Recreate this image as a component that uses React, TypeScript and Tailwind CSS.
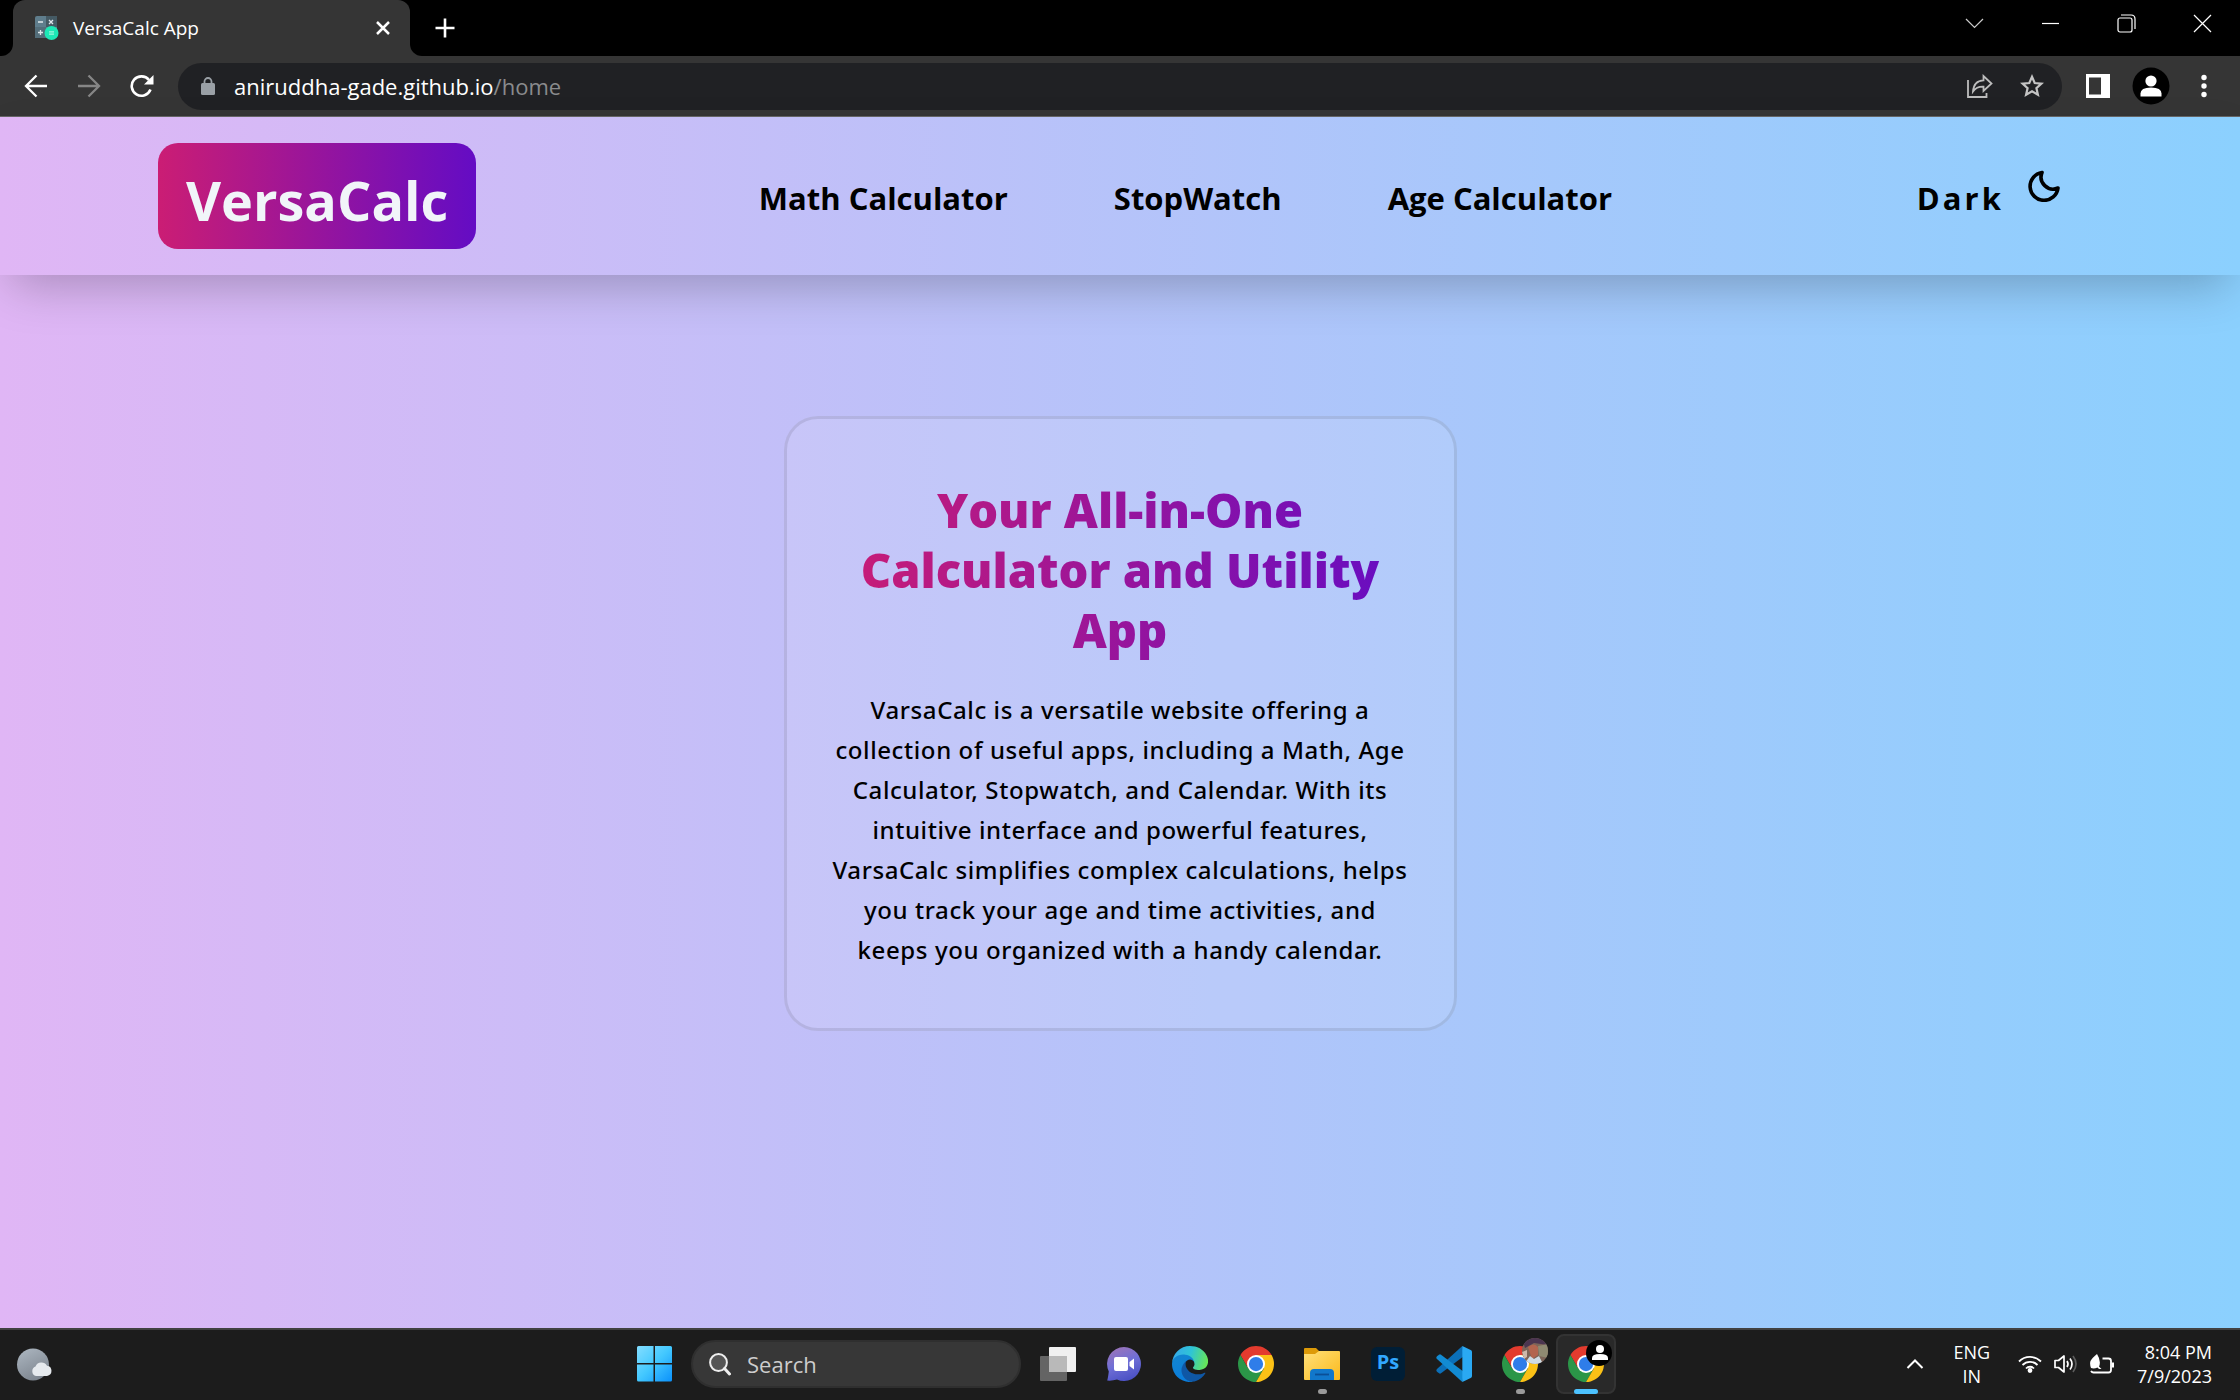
import React from "react";

function Favicon() {
  return (
    <svg width="24" height="24" viewBox="0 0 24 24" aria-hidden="true">
      <rect x="0" y="0" width="22" height="22" rx="2" fill="#5f7d8c" />
      <rect x="11" y="0" width="11" height="11" fill="#455a64" />
      <rect x="0" y="11" width="11" height="11" fill="#546e7a" />
      <path d="M3 6h5M14 4l4 4M18 4l-4 4M3 16.500h5M5.500 14v5" stroke="#dfe7ea" strokeWidth="1.300" />
      <circle cx="16.500" cy="17" r="7" fill="#1de9b6" />
      <path d="M14 15.800h5M14 18.200h5" stroke="#9ff7e0" strokeWidth="1.300" />
    </svg>
  );
}

function ChromeLogo() {
  return (
    <svg width="36" height="36" viewBox="0 0 48 48" aria-hidden="true">
      <path d="M24 12H44.780A24 24 0 0 0 3.220 12L13.600 30 24 24z" fill="#e33b2e" />
      <path d="M3.220 12A24 24 0 0 0 24 48L34.400 30 24 24 13.600 30z" fill="#2b9648" />
      <path d="M44.780 12A24 24 0 0 1 24 48L34.400 30 24 12z" fill="#fbc116" />
      <circle cx="24" cy="24" r="12" fill="#fff" />
      <circle cx="24" cy="24" r="9.500" fill="#2f7de9" />
    </svg>
  );
}

function EdgeLogo() {
  return (
    <svg width="36" height="36" viewBox="0 0 256 256" aria-hidden="true">
      <defs>
        <linearGradient id="edgeTop" x1="0" y1="0.3" x2="1" y2="0.5">
          <stop offset="0" stopColor="#35a8ec" />
          <stop offset="0.5" stopColor="#2fc4d6" />
          <stop offset="1" stopColor="#66e558" />
        </linearGradient>
        <linearGradient id="edgeMid" x1="0" y1="0" x2="0.300" y2="1">
          <stop offset="0" stopColor="#1386cf" />
          <stop offset="1" stopColor="#0a7ddb" />
        </linearGradient>
      </defs>
      <path fill="#0f57a5" d="M231 190.500c-3.400 1.800-6.900 3.400-10.500 4.700a101.200 101.200 0 0 1-35.800 6.300c-47.200 0-88.300-32.400-88.300-74 .1-11.400 6.400-21.800 16.400-27.300-42.700 1.800-53.700 46.300-53.700 72.300 0 73.800 68 81.200 82.600 81.200 7.900 0 19.800-2.300 27-4.500l1.300-.4a128.300 128.300 0 0 0 66.600-52.800 4 4 0 0 0-5.600-5.500z" />
      <path fill="url(#edgeMid)" d="M105.700 241.400a79.200 79.200 0 0 1-22.700-21.300 80.700 80.700 0 0 1 29.500-120c3.200-1.500 8.500-4.100 15.600-4a32.400 32.400 0 0 1 25.700 13 31.900 31.900 0 0 1 6.300 18.700c0-.2 24.500-79.600-80-79.600-43.900 0-80 41.700-80 78.200-.2 19.300 4 38.500 12.100 56a128 128 0 0 0 156.400 67 75.500 75.500 0 0 1-62.800-8z" />
      <path fill="url(#edgeTop)" d="M152.300 148.900c-.9 1-3.400 2.500-3.400 5.600 0 2.600 1.700 5.200 4.800 7.300 14.400 10.100 41.700 8.700 41.800 8.700 10.800 0 21.300-2.900 30.600-8.300a61.500 61.500 0 0 0 30.500-53c.3-22.400-8-37.300-11.400-44C223.700 23.200 177.700 0 127.700 0A128 128 0 0 0 0 126.200c.5-36.500 36.800-66 80-66 3.500 0 23.500.3 42 10 16.300 8.600 24.900 19 30.800 29.300 6.200 10.700 7.300 24.100 7.300 29.500 0 5.300-2.700 13.300-7.800 19.900z" />
    </svg>
  );
}

function CodeLogo() {
  return (
    <svg width="36" height="36" viewBox="0 0 108 108" aria-hidden="true">
      <path d="M79 0 3 69q-4 4 0 8l6 5q3 2 6 0L84 30z" fill="#0b6fb8" />
      <path d="M79 108 3 39q-4-4 0-8l6-5q3-2 6 0L84 78z" fill="#128bd3" />
      <path d="M79 0 104 12q4 2 4 6V90q0 4-4 6L79 108z" fill="#2aa9f3" />
    </svg>
  );
}

function StartLogo() {
  return (
    <svg width="36" height="36" viewBox="0 0 36 36" aria-hidden="true">
      <defs>
        <linearGradient id="winBlue" gradientUnits="userSpaceOnUse" x1="0" y1="0" x2="36" y2="36">
          <stop offset="0" stopColor="#85deff" />
          <stop offset="0.5" stopColor="#43c8ff" />
          <stop offset="1" stopColor="#0a90fb" />
        </linearGradient>
      </defs>
      <path d="M2.500 0H17.500v17H1V1.500A1.500 1.500 0 0 1 2.500 0zM19 0h15.500a1.500 1.500 0 0 1 1.500 1.500V17H19zM1 18.500h16.500v17H2.500A1.500 1.500 0 0 1 1 34zM19 18.500h17V34a1.500 1.500 0 0 1-1.500 1.500H19z" fill="url(#winBlue)" />
    </svg>
  );
}

function TaskViewLogo() {
  return (
    <svg width="36" height="36" viewBox="0 0 36 36" aria-hidden="true">
      <rect x="9" y="1" width="27" height="25" rx="1" fill="#f0f0f0" />
      <rect x="0" y="10" width="27" height="25" rx="1" fill="#646464" />
      <path d="M9 10H27V26H9z" fill="#b9b9b9" />
    </svg>
  );
}

function ChatLogo() {
  return (
    <svg width="36" height="36" viewBox="0 0 36 36" aria-hidden="true">
      <defs>
        <linearGradient id="chat" x1="0.2" y1="0" x2="0.6" y2="1">
          <stop offset="0" stopColor="#9d74b8" />
          <stop offset="0.5" stopColor="#6f6fd6" />
          <stop offset="1" stopColor="#4a50c4" />
        </linearGradient>
      </defs>
      <path d="M18 1a17 17 0 1 1-7 32.500Q6 35 1.200 34.500 2 32 2.800 25.500A17 17 0 0 1 18 1z" fill="url(#chat)" />
      <rect x="8" y="11" width="14" height="14" rx="2" fill="#fff" />
      <path d="M23.500 16 28 12.500V23.500L23.500 20z" fill="#fff" />
    </svg>
  );
}

function FolderLogo() {
  return (
    <svg width="36" height="36" viewBox="0 0 36 36" aria-hidden="true">
      <defs>
        <linearGradient id="folder" x1="0" y1="0" x2="1" y2="1">
          <stop offset="0" stopColor="#ffe07a" />
          <stop offset="1" stopColor="#fbb91b" />
        </linearGradient>
      </defs>
      <path d="M0 3q0-1 1-1h11l4 4-4 4H0z" fill="#dd9a08" />
      <path d="M0 8h11l4-3h20q1 0 1 1v27q0 1-1 1H1q-1 0-1-1z" fill="url(#folder)" />
      <path d="M6 34V27q0-4 4-4h16q4 0 4 4v7z" fill="#1177cb" />
      <path d="M11 28.500h14" stroke="#0b4f96" strokeWidth="1.800" />
    </svg>
  );
}

function PsLogo() {
  return (
    <span className="flex size-[34px] items-center justify-center rounded-md bg-[#001e36] pb-1 text-[20px] leading-none font-bold text-[#31a8ff]">
      Ps
    </span>
  );
}

function Avatar() {
  return (
    <svg width="26" height="26" viewBox="0 0 26 26" aria-hidden="true">
      <circle cx="13" cy="13" r="13" fill="#000" />
      <circle cx="14" cy="9" r="4" fill="#fff" />
      <path d="M6 20v-2q0-4 8-4t8 4v2z" fill="#fff" />
    </svg>
  );
}

function Photo() {
  return (
    <svg width="26" height="26" viewBox="0 0 26 26" aria-hidden="true">
      <clipPath id="photoClip">
        <circle cx="13" cy="13" r="13" />
      </clipPath>
      <g clipPath="url(#photoClip)">
        <path d="M0 0H26V26H0z" fill="#7d6559" />
        <path d="M0 0H26V7L12 5 3 10z" fill="#4b3550" />
        <path d="M16 8 26 6V20L17 18z" fill="#8f8a72" />
        <path d="M6 9q6-5 10 0v8l-6 4z" fill="#b3654f" />
        <path d="M3 25 8 18l4 3 5-3 3 6-6 4z" fill="#cfdbe4" />
        <path d="M0 14 5 12v7l-3 2z" fill="#cdb9ab" />
      </g>
    </svg>
  );
}

const apps = [
  { name: "Task View", icon: <TaskViewLogo /> },
  { name: "Chat", icon: <ChatLogo /> },
  { name: "Microsoft Edge", icon: <EdgeLogo /> },
  { name: "Google Chrome", icon: <ChromeLogo /> },
  { name: "File Explorer", icon: <FolderLogo />, running: true },
  { name: "Photoshop", icon: <PsLogo /> },
  { name: "Visual Studio Code", icon: <CodeLogo /> },
  { name: "Chrome, first profile", icon: <ChromeLogo />, running: true, badge: <Photo /> },
  { name: "Chrome, second profile", icon: <ChromeLogo />, active: true, badge: <Avatar /> },
];

function TabStrip() {
  return (
    <div className="flex h-14 items-stretch justify-between bg-black text-white">
      <div className="flex items-stretch">
        <div className="flex w-[13px] bg-[#353535]">
          <div className="flex-1 rounded-br-xl bg-black" />
        </div>
        <div className="bg-[#353535]">
          <div className="h-full bg-black">
            <div className="flex h-full w-[397px] items-center rounded-t-xl bg-[#353535] pr-[18px] pl-[22px]">
              <Favicon />
              <span className="ml-[14px] flex-1 text-[19px]">VersaCalc App</span>
              <button aria-label="Close tab">
                <svg width="18" height="18" viewBox="0 0 18 18">
                  <path d="M3 3l12 12M15 3 3 15" stroke="#fff" strokeWidth="2.500" />
                </svg>
              </button>
            </div>
          </div>
        </div>
        <div className="flex w-[13px] bg-[#353535]">
          <div className="flex-1 rounded-bl-xl bg-black" />
        </div>
        <button aria-label="New tab" className="ml-3">
          <svg width="20" height="20" viewBox="0 0 20 20">
            <path d="M10 0.500v19M0.500 10h19" stroke="#fff" strokeWidth="2.600" />
          </svg>
        </button>
      </div>
      <div className="flex items-start gap-[57px] pt-[14px] pr-[28px]">
        <button aria-label="Search tabs">
          <svg width="19" height="19" viewBox="0 0 19 19" fill="none" stroke="#ccc">
            <path d="M1 5l8.500 8.500L18 5" strokeWidth="1.200" />
          </svg>
        </button>
        <button aria-label="Minimize">
          <svg width="19" height="19" viewBox="0 0 19 19">
            <path d="M1 9.500h17" stroke="#fff" strokeWidth="1.200" />
          </svg>
        </button>
        <button aria-label="Restore">
          <svg width="19" height="19" viewBox="0 0 19 19" fill="none" stroke="#fff" strokeWidth="1.200">
            <rect x="1" y="4" width="14" height="14" rx="2" />
            <path d="M4 1h10q4 0 4 4v10" />
          </svg>
        </button>
        <button aria-label="Close window">
          <svg width="19" height="19" viewBox="0 0 19 19">
            <path d="M1 1l17 17M18 1 1 18" stroke="#fff" strokeWidth="1.200" />
          </svg>
        </button>
      </div>
    </div>
  );
}

function Toolbar() {
  return (
    <div className="flex h-[61px] items-center border-b border-[#666] bg-[#353535] px-[24px]">
      <div className="mr-[24px] flex gap-[29px]">
        <button aria-label="Back">
          <svg width="24" height="24" viewBox="0 0 24 24" fill="none" stroke="#fff" strokeWidth="2.300">
            <path d="M23 12H3M12.500 1.500 2 12l10.500 10.500" />
          </svg>
        </button>
        <button aria-label="Forward">
          <svg width="24" height="24" viewBox="0 0 24 24" fill="none" stroke="#868686" strokeWidth="2.300">
            <path d="M1 12h20M11.500 1.500 22 12 11.500 22.500" />
          </svg>
        </button>
        <button aria-label="Reload">
          <svg width="24" height="24" viewBox="0 0 24 24">
            <path d="M20.500 15.500a9.700 9.700 0 1 1-1.500-9.500" fill="none" stroke="#fff" strokeWidth="2.600" />
            <path d="M23.500 1v9.500H14z" fill="#fff" />
          </svg>
        </button>
      </div>
      <div className="flex h-[47px] flex-1 items-center rounded-full bg-[#202124] pr-[18px] pl-[23px]">
        <svg width="14" height="18" viewBox="0 0 14 18" aria-hidden="true">
          <rect x="0" y="6" width="14" height="12" rx="1.500" fill="#9aa0a6" />
          <path d="M3.500 7V4.500a3.500 3.500 0 0 1 7 0V7" fill="none" stroke="#9aa0a6" strokeWidth="1.800" />
        </svg>
        <span className="ml-[19px] flex-1 text-[22px] text-white">
          aniruddha-gade.github.io<span className="text-[#8a8b8d]">/home</span>
        </span>
        <button aria-label="Share" className="mr-[27px]">
          <svg width="26" height="24" viewBox="0 0 26 24" fill="none" stroke="#bdbdbd" strokeWidth="1.800">
            <path d="M1 6v17h18.500v-4" />
            <path d="M6 17.500C6.500 10.500 10.500 6.500 16.500 6.300V2l8 7.500-8 7.500v-4.300C12 12.500 8.500 14 6 17.500z" />
          </svg>
        </button>
        <button aria-label="Bookmark this page">
          <svg width="24" height="24" viewBox="0 0 24 24" fill="none" stroke="#c4c4c4" strokeWidth="2.200">
            <path d="m12 2.800 2.700 6.200 6.800.6-5.100 4.500 1.500 6.600L12 17.200l-5.900 3.500 1.500-6.600-5.100-4.500 6.800-.6z" />
          </svg>
        </button>
      </div>
      <button aria-label="Side panel" className="ml-6">
        <svg width="24" height="24" viewBox="0 0 24 24">
          <path d="M0 0h24v24H0zM3 3.500v17h12v-17z" fill="#fff" fillRule="evenodd" />
        </svg>
      </button>
      <button aria-label="Profile" className="ml-[22px]">
        <svg width="38" height="38" viewBox="0 0 38 38">
          <circle cx="19" cy="19" r="18.500" fill="#000" />
          <circle cx="19" cy="14" r="5.600" fill="#fff" />
          <path d="M8.500 29.500v-3q0-6 10.500-6t10.500 6v3z" fill="#fff" />
        </svg>
      </button>
      <button aria-label="Menu" className="ml-[22px]">
        <svg width="24" height="24" viewBox="0 0 24 24" fill="#fff">
          <circle cx="12" cy="3.500" r="2.700" />
          <circle cx="12" cy="12" r="2.700" />
          <circle cx="12" cy="20.500" r="2.700" />
        </svg>
      </button>
    </div>
  );
}

function SiteHeader() {
  return (
    <header className="flex items-center justify-between bg-linear-to-r/srgb from-[#e0b6f5] to-[#8bd0fe] px-[158px] py-[26px] shadow-[0_20px_50px_-12px_rgba(0,0,0,0.26)]">
      <a href="#home" className="rounded-[20px] bg-linear-to-r/srgb from-[#cb1d74] to-[#640cc4] px-7 pt-2 text-[54px] leading-[98px] font-bold text-[#f1f5f9]">
        VersaCalc
      </a>
      <nav className="flex gap-[106px] pt-1 text-[31px] font-bold text-black">
        <a href="#math">Math Calculator</a>
        <a href="#stopwatch">StopWatch</a>
        <a href="#age">Age Calculator</a>
      </nav>
      <button className="flex items-center gap-6 px-[22px] pt-1 text-[31px] font-bold tracking-widest text-black">
        Dark
        <svg width="32" height="32" viewBox="0 0 32 32" className="mb-6" fill="none" stroke="#000" strokeWidth="3.600" strokeLinejoin="round" aria-hidden="true">
          <path d="M14 2.500A14 14 0 1 0 30 18 12 12 0 0 1 14 2.500z" />
        </svg>
      </button>
    </header>
  );
}

function Taskbar() {
  return (
    <footer className="grid h-[72px] grid-cols-[1fr_auto_1fr] items-center border-t-2 border-[#414141] bg-[#1c1c1c] text-white">
      <button aria-label="Weather" className="ml-4 justify-self-start">
        <svg width="36" height="34" viewBox="0 0 36 34">
          <defs>
            <linearGradient id="moonGrey" x1="0.2" y1="0" x2="0.700" y2="1">
              <stop offset="0" stopColor="#aab4be" />
              <stop offset="1" stopColor="#7b838d" />
            </linearGradient>
          </defs>
          <circle cx="17" cy="16.500" r="16" fill="url(#moonGrey)" />
          <path d="M20 28a5 5 0 0 1-.5-9.500 6.500 6.500 0 0 1 11.500-.8A5.200 5.200 0 0 1 31 28z" fill="#e6eaee" />
        </svg>
      </button>
      <div className="flex items-center pb-0.5">
        <button aria-label="Start" className="flex w-[66px] justify-center">
          <StartLogo />
        </button>
        <label className="mx-1 flex h-12 w-[330px] items-center gap-4 rounded-full border-2 border-[#2f2f2f] bg-[#373737] pl-4">
          <svg width="22" height="23" viewBox="0 0 22 23" fill="none" stroke="#eee" aria-hidden="true">
            <circle cx="9.500" cy="9.500" r="8.400" strokeWidth="2" fill="#555" />
            <path d="m15.500 15.500 5 5.500" strokeWidth="3" strokeLinecap="round" />
          </svg>
          <input type="text" aria-label="Search" placeholder="Search" className="w-60 bg-transparent text-[22px] outline-none placeholder:text-[#cdcdcd]" />
        </label>
        {apps.map((app) => (
          <button key={app.name} aria-label={app.name} className="flex w-[66px] justify-center">
            <span className={app.active ? "relative flex size-[60px] items-center justify-center rounded-lg border-2 border-[#333] bg-[#292929]" : "relative flex size-[60px] items-center justify-center"}>
              {app.icon}
              {app.badge && <span className="absolute top-1 right-0.5">{app.badge}</span>}
              {app.running && <span className="absolute bottom-0 h-[5px] w-[9px] rounded-full bg-[#9a9a9a]" />}
              {app.active && <span className="absolute -bottom-0.5 h-[5px] w-6 rounded-full bg-[#4cc2ff]" />}
            </span>
          </button>
        ))}
      </div>
      <div className="flex items-center justify-self-end pr-[28px] pb-0.5">
        <button aria-label="Show hidden icons">
          <svg width="18" height="12" viewBox="0 0 18 12" fill="none" stroke="#fff" strokeWidth="2">
            <path d="M1.500 10 9 2.500l7.500 7.500" />
          </svg>
        </button>
        <button className="ml-[29px] text-center text-[18px] leading-6">
          ENG
          <br />
          IN
        </button>
        <button aria-label="Network, sound and battery" className="ml-[28px] flex items-center gap-3">
          <svg width="24" height="18" viewBox="0 0 24 18" fill="none" stroke="#fff" strokeWidth="1.800">
            <path d="M1 6.500a15.500 15.500 0 0 1 22 0M4.500 10a10.500 10.500 0 0 1 15 0M8 13.500a5.500 5.500 0 0 1 8 0" />
            <circle cx="12" cy="15.500" r="1.500" fill="#fff" />
          </svg>
          <svg width="24" height="20" viewBox="0 0 24 20" fill="none" stroke="#fff" strokeWidth="1.700">
            <path d="M1 6.500h3.500L10 2v16l-5.500-4.500H1z" strokeLinejoin="round" />
            <path d="M13 7q2 3 0 6M16 4.500q4 5.500 0 11" />
            <path d="M19 2q6 8 0 16" stroke="#5c5c5c" />
          </svg>
          <svg width="25" height="20" viewBox="0 0 25 20">
            <path d="M12.500 4.500h6q2.500 0 2.500 2.500v9q0 2.500-2.500 2.500H3.500Q2 18.500 1 17" fill="none" stroke="#fff" strokeWidth="1.800" />
            <path d="M21.500 8.500H24v5h-2.500zM7 0q4.500 7 2 12.500l2.500 2.500H9l-1.500-1.500Q4 15 1 14-.5 10 .5 7 2 4 7 0z" fill="#fff" />
          </svg>
        </button>
        <button className="ml-[22px] text-right text-[18px] leading-6">
          8:04 PM
          <br />
          7/9/2023
        </button>
      </div>
    </footer>
  );
}

export default function App() {
  return (
    <div className="flex min-h-screen flex-col font-['Open_Sans','Noto_Sans',sans-serif]">
      <TabStrip />
      <Toolbar />
      <div className="flex flex-1 flex-col bg-linear-to-r/srgb from-[#e0b6f5] to-[#8bd0fe]">
        <SiteHeader />
        <main className="flex flex-1 justify-center pt-[141px] pb-10">
          <section className="w-[673px] self-start rounded-[34px] border-3 border-[#00000018] bg-white/10 px-[42px] pt-[61px] pb-[58px] text-center text-black">
            <h1 className="bg-linear-to-r/srgb from-[#cb1d74] to-[#640cc4] bg-clip-text px-8 text-[47px] leading-[60px] font-extrabold text-transparent">
              Your All-in-One Calculator and Utility App
            </h1>
            <p className="mt-[30px] font-['Noto_Sans','Open_Sans',sans-serif] text-[24px] leading-[40px] font-medium tracking-wide">
              VarsaCalc is a versatile website offering a collection of useful apps, including a Math, Age Calculator, Stopwatch, and Calendar. With its intuitive interface and powerful features, VarsaCalc simplifies complex calculations, helps you track your age and time activities, and keeps you organized with a handy calendar.
            </p>
          </section>
        </main>
      </div>
      <Taskbar />
    </div>
  );
}
